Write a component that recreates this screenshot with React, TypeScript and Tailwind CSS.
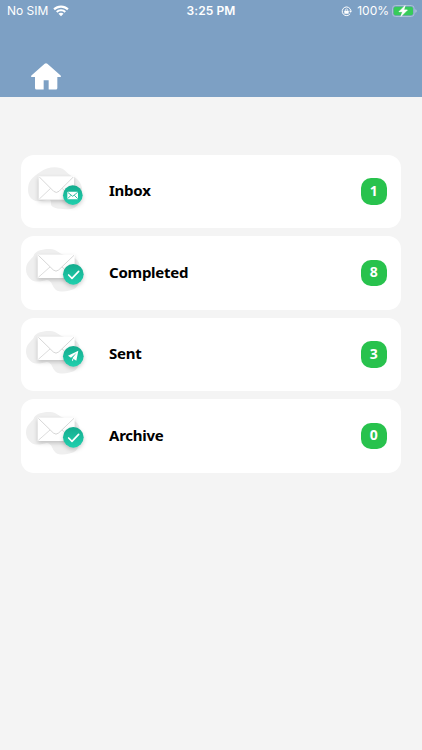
import React from "react";

type BadgeKind = "mail" | "check" | "plane";

interface Folder {
  label: string;
  count: number;
  badge: BadgeKind;
}

const FOLDERS: Folder[] = [
  { label: "Inbox",     count: 1, badge: "mail"  },
  { label: "Completed", count: 8, badge: "check" },
  { label: "Sent",      count: 3, badge: "plane" },
  { label: "Archive",   count: 0, badge: "check" },
];

function WifiIcon() {
  return (
    <svg viewBox="0 0 48 35" className="h-[12px] w-[16px]" fill="#fff">
      <path d="M24 1C15 1 7 4.500 1 10.200L5.600 15C10.500 10.400 17 7.600 24 7.600S37.500 10.400 42.400 15L47 10.200C41 4.500 33 1 24 1Z" />
      <path d="M24 12C18.200 12 13 14.200 9 17.900L13.600 22.700C16.400 20.100 20 18.600 24 18.600S31.600 20.100 34.400 22.700L39 17.900C35 14.200 29.800 12 24 12Z" />
      <path d="M24 23C21 23 18.400 24 16.400 25.700L24 33.500L31.600 25.700C29.600 24 27 23 24 23Z" />
    </svg>
  );
}

function RotationLockIcon() {
  return (
    <svg viewBox="0 0 33 33" className="h-[11px] w-[11px]" fill="none" stroke="#fff" strokeWidth="3">
      <path d="M27.500 23A13 13 0 1 1 29.500 14" />
      <path d="M24 14H33L29 20.500Z" fill="#fff" stroke="none" />
      <rect x="10" y="14.500" width="13" height="9" rx="1.500" fill="#fff" stroke="none" />
      <path d="M13 15V12.500a3.500 3.500 0 0 1 7 0V15" strokeWidth="2.200" />
    </svg>
  );
}

function BatteryIcon() {
  return (
    <svg viewBox="0 0 75 36" className="h-[12px] w-[25px]">
      <rect x="1.500" y="1.500" width="65" height="33" rx="9" fill="none" stroke="#b4c8dc" strokeWidth="2.500" />
      <rect x="5" y="5" width="58" height="26" rx="6" fill="#37cb5a" />
      <path d="M70 12.500C73 13.500 74 16 74 18S73 22.500 70 23.500Z" fill="#b4c8dc" />
      <path d="M39 2L21 20H32L27 34L46 15H35Z" fill="#fff" stroke="#fff" strokeWidth="2.500" strokeLinejoin="round" />
    </svg>
  );
}

function HomeIcon() {
  return (
    <svg viewBox="0 0 90 81" className="h-[27px] w-[30px]" fill="#fff">
      <path d="M41 2.500Q45 -1 49 2.500L88 37Q92 41.500 87 42H79V75Q79 79.500 74.500 79.500H53V52H38V79.500H16.500Q12 79.500 12 75V42H3Q-2 41.500 2 37Z" />
    </svg>
  );
}

function BadgeGlyph({ kind }: { kind: BadgeKind }) {
  if (kind === "mail")
    return (
      <g>
        <rect x="157" y="124" width="32" height="23" rx="2" fill="#fff" />
        <path d="M158 126L173 138L188 126M158 145L168 135M188 145L178 135" fill="none" stroke="#18b697" strokeWidth="2.600" />
      </g>
    );
  if (kind === "plane")
    return (
      <g fill="#fff">
        <path d="M190 111L159 126L168 132L185 117L172 134L184 141Z" />
        <path d="M171 136V143L176 138.500Z" />
      </g>
    );
  return (
    <path d="M161 130L171 140L191 119" fill="none" stroke="#fff" strokeWidth="5" strokeLinecap="round" strokeLinejoin="round" />
  );
}

function EnvelopeIcon({ kind }: { kind: BadgeKind }) {
  const inbox = kind === "mail";
  return (
    <svg viewBox="18 13 222 220" className="h-[73.3px] w-[74px] shrink-0">
      <defs>
        <linearGradient id={`disc-${kind}`} x1="0" y1="0" x2="0" y2="1">
          <stop offset="0" stopColor="#14ab8d" />
          <stop offset="1" stopColor="#20d0ae" />
        </linearGradient>
        <filter id={`shadow-${kind}`} x="-30%" y="-30%" width="160%" height="180%" colorInterpolationFilters="sRGB">
          <feDropShadow dx="0" dy="6" stdDeviation="6" floodColor="#000" floodOpacity="0.2" />
        </filter>
      </defs>
      {inbox ? (
        <path d="M40 106C42 88 60 74 76 64C94 48 133 45 148 58C158 68 166 76 177 79C192 86 204 105 201 124C198 145 190 170 172 174C150 177 121 176 111 167C105 160 111 151 104 147C85 147 69 156 56 149C41 140 37 125 40 106Z" fill="#efefef" />
      ) : (
        <path d="M34 104C37 89 50 82 56 72C60 57 84 51 106 52C124 53 132 65 145 69C168 72 190 79 194 99C200 125 196 164 176 173C161 179 137 184 122 174C111 164 112 148 96 145C80 149 62 154 49 144C35 134 31 119 34 104Z" fill="#efefef" />
      )}
      <g transform={inbox ? "translate(3 8)" : undefined}>
        <rect x="68" y="69" width={inbox ? 106 : 111} height="70" fill="#fff" filter={`url(#shadow-${kind})`} />
        <path d={inbox ? "M70 71L113 114Q121 121 129 114L172 71" : "M70 71L115 115Q123 122 131 115L177 71"} fill="none" stroke="#cfcfcf" strokeWidth="2.600" />
        <path d={inbox ? "M70 137L104 105M172 137L138 105" : "M70 137L105 106M177 137L141 106"} fill="none" stroke="#d6d6d6" strokeWidth="2.600" />
      </g>
      <g transform={inbox ? "translate(0 -1)" : undefined}>
        <circle
          cx={inbox ? 173.500 : 175}
          cy={inbox ? 134.500 : 128}
          r={inbox ? 29.500 : 31}
          fill={`url(#disc-${kind})`}
          filter={`url(#shadow-${kind})`}
        />
        <BadgeGlyph kind={kind} />
      </g>
    </svg>
  );
}

function FolderRow({ folder }: { folder: Folder }) {
  return (
    <button className="flex h-[73.3px] w-full items-center rounded-[13px] bg-white pr-[14px] text-left">
      <EnvelopeIcon kind={folder.badge} />
      <span className="ml-[14px] flex-1 pb-[3px] text-[15px] leading-5 font-bold tracking-[-0.25px] text-black">
        {folder.label}
      </span>
      <span className="flex h-[26.5px] w-[26.5px] items-center justify-center rounded-[10px] bg-[#28c24d] pb-[2px] text-[14px] leading-none font-bold text-white">
        {folder.count}
      </span>
    </button>
  );
}

export default function App() {
  return (
    <div className="flex h-[750px] w-[422px] flex-col overflow-hidden bg-[#f4f4f4] font-['Noto_Sans','Open_Sans',sans-serif]">
      <header className="h-[97px] bg-[#7da0c4] text-white">
        <div className="grid h-[22px] grid-cols-3 items-center pr-[5px] pl-[7px] font-['Inter',sans-serif] text-[12px]">
          <div className="flex items-center gap-[5px]">
            <span>No SIM</span>
            <WifiIcon />
          </div>
          <span className="pr-[2px] text-center font-semibold tracking-[0.1px]">3:25 PM</span>
          <div className="flex items-center justify-end">
            <RotationLockIcon />
            <span className="mr-[3px] ml-[5px]">100%</span>
            <BatteryIcon />
          </div>
        </div>
        <div className="pt-[41px] pl-[31px]">
          <HomeIcon />
        </div>
      </header>
      <main className="flex flex-col gap-[8.2px] px-[21px] pt-[58px]">
        {FOLDERS.map((folder) => (
          <FolderRow key={folder.label} folder={folder} />
        ))}
      </main>
    </div>
  );
}
